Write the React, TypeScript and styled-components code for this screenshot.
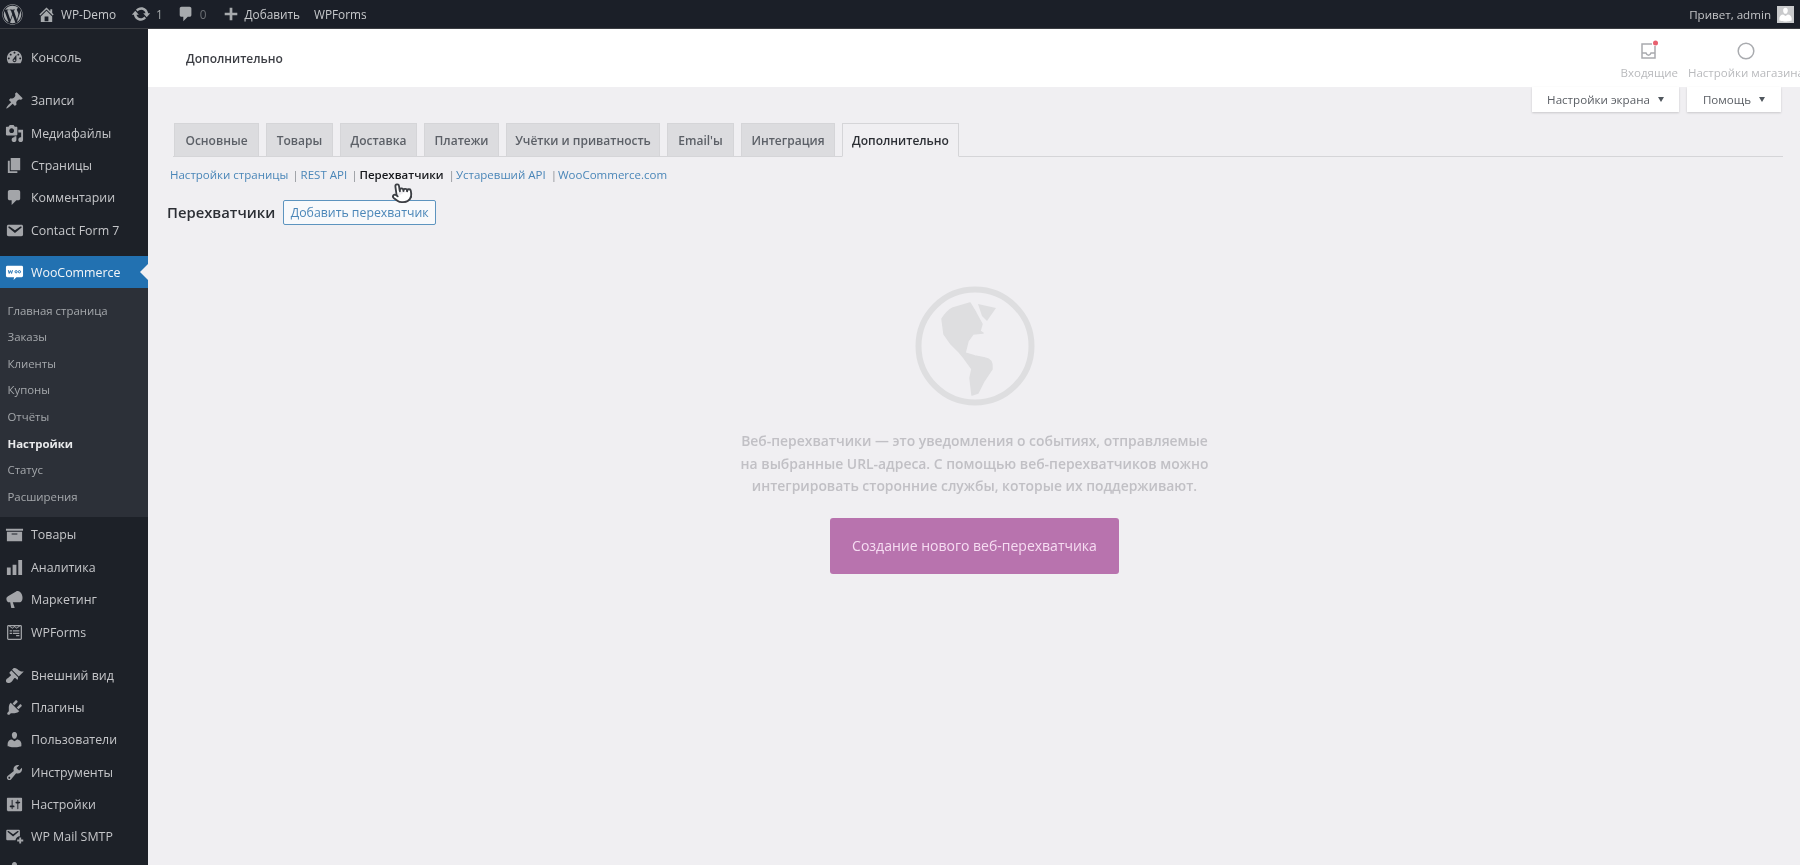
import React from 'react'
import styled, { createGlobalStyle } from 'styled-components'
import { FaWordpress, FaWpforms } from 'react-icons/fa'
import { LuPointer } from 'react-icons/lu'

const Global = createGlobalStyle`
  html, body { margin: 0; padding: 0; background: #f0eff2; height: 100%; overflow: hidden; }
  body { font-family: "Open Sans", "Noto Sans", sans-serif; }
  * { box-sizing: border-box; }
`

const paths = {
  dashboard: 'M3.76 16h12.48c1.1-1.37 1.76-3.11 1.76-5 0-4.42-3.58-8-8-8s-8 3.58-8 8c0 1.89.66 3.63 1.76 5zM10 4c.55 0 1 .45 1 1s-.45 1-1 1-1-.45-1-1 .45-1 1-1zM6 6c.55 0 1 .45 1 1s-.45 1-1 1-1-.45-1-1 .45-1 1-1zm8 0c.55 0 1 .45 1 1s-.45 1-1 1-1-.45-1-1 .45-1 1-1zm-5.37 5.55L12 7v6c0 1.1-.9 2-2 2s-2-.9-2-2c0-.57.24-1.08.63-1.45zM4 10c.55 0 1 .45 1 1s-.45 1-1 1-1-.45-1-1 .45-1 1-1zm12 0c.55 0 1 .45 1 1s-.45 1-1 1-1-.45-1-1 .45-1 1-1zm-5 3c0-.55-.45-1-1-1s-1 .45-1 1 .45 1 1 1 1-.45 1-1z',
  pin: 'M10.44 3.02l1.82-1.82 6.36 6.35-1.83 1.82c-1.05-.68-2.48-.57-3.41.36l-.75.75c-.92.93-1.04 2.35-.35 3.41l-1.83 1.82-2.41-2.41-2.8 2.79c-.42.42-3.38 2.71-3.8 2.29s1.86-3.39 2.28-3.81l2.79-2.79L4.1 9.36l1.83-1.82c1.05.69 2.48.57 3.4-.36l.75-.75c.93-.92 1.05-2.35.36-3.41z',
  media: 'M13 11V4c0-.55-.45-1-1-1h-1.67L9 1H5L3.67 3H2c-.55 0-1 .45-1 1v7c0 .55.45 1 1 1h10c.55 0 1-.45 1-1zM7 4.5c1.38 0 2.5 1.12 2.5 2.5S8.38 9.5 7 9.5 4.5 8.38 4.5 7 5.62 4.5 7 4.5zM14 6h5v10.5c0 1.38-1.12 2.5-2.5 2.5S14 17.88 14 16.5s1.12-2.5 2.5-2.5c.17 0 .34.02.5.05V9h-3V6zm-4 8.05V13h2v3.5c0 1.38-1.12 2.5-2.5 2.5S7 17.88 7 16.5 8.12 14 9.5 14c.17 0 .34.02.5.05z',
  pages: 'M6 15V2h10v13H6zm-1 1h8v2H3V5h2v11z',
  comment: 'M5 2h9c1.1 0 2 .9 2 2v7c0 1.1-.9 2-2 2h-2l-5 5v-5H5c-1.1 0-2-.9-2-2V4c0-1.1.9-2 2-2z',
  mail: 'M3.87 4h13.25C18.37 4 19 4.59 19 5.79v8.42c0 1.19-.63 1.79-1.88 1.79H3.87c-1.25 0-1.88-.6-1.88-1.79V5.79c0-1.2.63-1.79 1.88-1.79zm6.62 8.6l6.74-5.53c.24-.2.43-.66.13-1.07-.29-.41-.82-.42-1.17-.17l-5.7 3.86L4.8 5.83c-.35-.25-.88-.24-1.17.17-.3.41-.11.87.13 1.07z',
  archive: 'M19 4v2H1V4h18zM2 7h16v10H2V7zm11 3V9H7v1h6z',
  bars: 'M18 18V2h-4v16h4zm-6 0V7H8v11h4zm-6 0v-8H2v8h4z',
  megaphone: 'M18.15 5.94c.46 1.62.38 3.22-.02 4.48-.42 1.28-1.26 2.18-2.3 2.48-.16.06-.26.06-.4.06-.06.02-.12.02-.18.02-.06.02-.14.02-.22.02H8.2l1.9 5.5c.02.14-.06.26-.14.34-.08.1-.24.16-.34.16H6.95c-.1 0-.26-.06-.34-.16-.08-.08-.16-.2-.14-.34l-1-5.5H4.25l-.02-.02c-.5.06-1.08-.18-1.54-.62s-.88-1.08-1.06-1.88c-.24-.8-.2-1.56-.02-2.2.18-.62.58-1.08 1.06-1.3l.02-.02 9-5.4c.1-.06.18-.1.24-.16.06-.04.14-.08.24-.12.16-.08.28-.12.5-.18 1.04-.3 2.24.1 3.22 1 .98.88 1.84 2.24 2.26 3.86z',
  brush: 'M14.48 11.06L7.41 3.99l1.5-1.5c.5-.56 2.3-.47 3.51.32 1.21.8 1.43 1.28 2.91 2.1 1.18.64 2.45 1.26 4.45.85zm-.71.71L6.7 4.7 4.93 6.47c-.39.39-.39 1.02 0 1.41l1.06 1.06c.39.39.39 1.03 0 1.42-.6.6-1.43 1.11-2.21 1.69-.35.26-.7.53-1.01.84C1.43 13.23 1 14.86 1 15.5s.5 2.5 2.5 2.5c.96 0 2.62-.63 3.72-1.77.3-.31.57-.66.83-1.01.58-.79 1.09-1.61 1.69-2.21.39-.39 1.02-.39 1.41 0l1.06 1.06c.39.39 1.02.39 1.41 0z',
  plugin: 'M13.11 4.36L9.87 7.6 8 5.73l3.24-3.24c.35-.34 1.05-.2 1.56.32.52.51.66 1.21.31 1.55zm-8 1.77l.91-1.12 9.01 9.01-1.19.84c-.71.71-2.63 1.16-3.82 1.16H6.14L4.9 17.26c-.59.59-1.54.59-2.12 0-.59-.58-.59-1.53 0-2.12l1.24-1.24v-3.88c0-1.13.4-3.19 1.09-3.89zm7.26 3.97l3.24-3.24c.34-.35 1.04-.21 1.55.31.52.51.66 1.21.31 1.55l-3.24 3.25z',
  user: 'M10 9.25c-2.27 0-2.73-3.44-2.73-3.44C7 4.02 7.82 2 9.97 2c2.16 0 2.98 2.02 2.71 3.81 0 0-.41 3.44-2.68 3.44zm0 2.57L12.72 10c2.39 0 4.52 2.33 4.52 4.53v2.49s-3.65 1.13-7.24 1.13c-3.65 0-7.24-1.13-7.24-1.13v-2.49c0-2.25 1.94-4.48 4.47-4.48z',
  wrench: 'M16.68 9.77c-1.34 1.34-3.3 1.67-4.95.99l-5.41 6.52c-.99.99-2.59.99-3.58 0s-.99-2.59 0-3.57l6.52-5.42c-.68-1.65-.35-3.61.99-4.95 1.28-1.28 3.12-1.62 4.72-1.06l-2.89 2.89 2.82 2.82 2.86-2.87c.53 1.58.18 3.39-1.08 4.65zM3.81 16.21c.4.39 1.04.39 1.43 0 .4-.4.4-1.04 0-1.43-.39-.4-1.03-.4-1.43 0-.39.39-.39 1.03 0 1.43z',
  sliders: 'M18 16V4c0-.55-.45-1-1-1H3c-.55 0-1 .45-1 1v12c0 .55.45 1 1 1h14c.55 0 1-.45 1-1zM8 11h1c.55 0 1 .45 1 1s-.45 1-1 1H8v1.5c0 .28-.22.5-.5.5s-.5-.22-.5-.5V13H6c-.55 0-1-.45-1-1s.45-1 1-1h1V5.5c0-.28.22-.5.5-.5s.5.22.5.5V11zm5-2h-1c-.55 0-1-.45-1-1s.45-1 1-1h1V5.5c0-.28.22-.5.5-.5s.5.22.5.5V7h1c.55 0 1 .45 1 1s-.45 1-1 1h-1v5.5c0 .28-.22.5-.5.5s-.5-.22-.5-.5V9z',
  home: 'M16 8.5l1.53 1.53-1.06 1.06L10 4.62l-6.47 6.47-1.06-1.06L10 2.5l4 4v-2h2v4zm-6-2.46l6 5.99V18H4v-5.97zM12 17v-5H8v5h4z',
  plus: 'M17 8.5v3h-5.5V17h-3v-5.5H3v-3h5.5V3h3v5.5H17z',
  update: 'M10.2 3.28c3.53 0 6.43 2.61 6.92 6h2.08l-3.5 4-3.5-4h2.32c-.45-1.97-2.21-3.45-4.32-3.45-1.45 0-2.73.71-3.54 1.78L4.95 5.66C6.23 4.2 8.11 3.28 10.2 3.28zm-.4 13.44c-3.52 0-6.43-2.61-6.92-6H.8l3.5-4c1.17 1.33 2.33 2.67 3.5 4H5.48c.45 1.97 2.21 3.45 4.32 3.45 1.45 0 2.73-.71 3.54-1.78l1.71 1.95c-1.28 1.46-3.15 2.38-5.25 2.38z',
  mailPlus: 'M2.9 3h11.2C15.2 3 15.7 3.5 15.7 4.5v5.2c-2.6.1-4.4 1.9-4.6 4.3H2.9C1.8 14 1.3 13.5 1.3 12.5v-8C1.3 3.5 1.8 3 2.9 3zm5.6 7l5.6-4.7c.2-.2.3-.5.1-.8-.2-.4-.7-.4-1-.2L8.5 7.6 3.8 4.3c-.3-.2-.8-.2-1 .2-.2.3-.1.6.1.8zM15 11h2v2.2h2.2v2H17v2.2h-2v-2.2h-2.2v-2H15z',
}

type IconName = keyof typeof paths

const Dash: React.FC<{ name: IconName; size?: number }> = ({ name, size = 19 }) => (
  <svg width={size} height={size} viewBox="0 0 20 20" fill="currentColor">
    <path d={paths[name]} />
  </svg>
)

const Page = styled.div`
  width: 1800px;
  height: 865px;
  overflow: hidden;
  display: flex;
  flex-direction: column;
  position: relative;
  filter: blur(0.6px);
`

const TopBar = styled.header`
  height: 29px;
  flex: none;
  background: #1b1f28;
  color: #c8cacd;
  display: flex;
  align-items: center;
  font-size: 11.8px;
  border-bottom: 1px solid #3b3d42;
`

const TopItem = styled.div<{ $left: number }>`
  display: flex;
  align-items: center;
  gap: 5px;
  margin-left: ${(p) => p.$left}px;
  white-space: nowrap;
  svg { color: #a7aaad; flex: none; }
`

const Count = styled.span<{ $dim?: boolean }>`
  color: ${(p) => (p.$dim ? '#6d7075' : '#a7aaad')};
`

const TopRight = styled.div`
  margin-left: auto;
  margin-right: 6px;
  display: flex;
  align-items: center;
  gap: 6px;
  color: #c3c4c7;
  font-size: 11.6px;
`

const Avatar = styled.div`
  width: 17px;
  height: 17px;
  background: #c9cacc;
  display: flex;
  align-items: flex-end;
  justify-content: center;
  color: #fff;
  overflow: hidden;
`

const Body = styled.div`
  flex: 1;
  display: flex;
  min-height: 0;
`

const Sidebar = styled.nav`
  width: 148px;
  flex: none;
  background: #1d2128;
  padding-top: 12.5px;
  overflow: hidden;
`

const MenuRow = styled.div<{ $gap?: number; $active?: boolean }>`
  height: 32.4px;
  margin-top: ${(p) => p.$gap ?? 0}px;
  display: flex;
  align-items: center;
  gap: 7px;
  padding-left: 5px;
  font-size: 12.4px;
  white-space: nowrap;
  position: relative;
  background: ${(p) => (p.$active ? '#2271b1' : 'transparent')};
  color: ${(p) => (p.$active ? '#f4f6f8' : '#c5c6c9')};
  svg { flex: none; color: ${(p) => (p.$active ? '#fff' : '#a3a5a9')}; }
`

const Notch = styled.span`
  position: absolute;
  right: 0;
  top: 50%;
  margin-top: -8px;
  border: 8px solid transparent;
  border-right-color: #f0eff2;
  border-left-width: 0;
`

const SubMenu = styled.div`
  background: #2c3038;
  padding: 8.5px 0 7.7px;
  margin-bottom: 1.4px;
`

const SubRow = styled.div<{ $current?: boolean }>`
  height: 26.6px;
  display: flex;
  align-items: center;
  padding-left: 7.5px;
  font-size: 11.4px;
  font-weight: ${(p) => (p.$current ? 700 : 400)};
  color: ${(p) => (p.$current ? '#e9eaec' : '#a5a8ac')};
`

const Main = styled.main`
  flex: 1;
  min-width: 0;
  display: flex;
  flex-direction: column;
  background: #f0eff2;
`

const Header = styled.div`
  height: 58px;
  flex: none;
  background: #fff;
  display: flex;
  align-items: center;
  padding-left: 38px;
  font-size: 12px;
  font-weight: 600;
  color: #3c3e44;
`

const HeaderTitle = styled.div`
  flex: 1;
  margin-top: 1px;
`

const Activity = styled.div`
  display: flex;
  gap: 10px;
  margin-right: -4px;
  margin-top: 3px;
  flex: none;
`

const ActivityItem = styled.div`
  display: flex;
  flex-direction: column;
  align-items: center;
  gap: 3px;
  color: #b9babd;
  font-size: 11.5px;
  font-weight: 400;
  white-space: nowrap;
`

const ActivityIcon = styled.div`
  height: 22px;
  display: flex;
  align-items: center;
  justify-content: center;
  color: #a9abaf;
`

const Content = styled.div`
  padding: 0 17px 0 26px;
  position: relative;
`

const ScreenMeta = styled.div`
  display: flex;
  justify-content: flex-end;
  gap: 8px;
  padding-right: 2px;
  height: 25px;
`

const MetaButton = styled.div<{ $width: number }>`
  width: ${(p) => p.$width}px;
  height: 25px;
  background: #fff;
  box-shadow: 0 1px 2px rgba(0, 0, 0, 0.16);
  display: flex;
  align-items: center;
  justify-content: center;
  gap: 8px;
  font-size: 11.6px;
  color: #5a5e64;
  &::after {
    content: '';
    border: 3.5px solid transparent;
    border-top: 5px solid #50575e;
    border-bottom-width: 0;
  }
`

const Tabs = styled.div`
  margin-top: 11px;
  margin-left: -1px;
  padding-left: 1px;
  height: 34px;
  display: flex;
  gap: 7px;
  border-bottom: 1px solid #d5d5d8;
`

const Tab = styled.div<{ $active?: boolean; $width: number }>`
  width: ${(p) => p.$width}px;
  height: ${(p) => (p.$active ? 34 : 33)}px;
  display: flex;
  align-items: center;
  justify-content: center;
  flex: none;
  font-size: 12px;
  font-weight: 600;
  white-space: nowrap;
  background: ${(p) => (p.$active ? '#f0eff2' : '#dcdcdf')};
  color: ${(p) => (p.$active ? '#2c2f35' : '#5c6067')};
  border: 1px solid #d5d5d8;
  border-bottom: ${(p) => (p.$active ? '1px solid #f0eff2' : 'none')};
`

const SubNav = styled.div`
  display: flex;
  align-items: center;
  height: 18px;
  margin-top: 8px;
  margin-left: -4px;
  font-size: 11.5px;
  white-space: nowrap;
`

const SubLink = styled.span<{ $current?: boolean }>`
  color: ${(p) => (p.$current ? '#16181c' : '#4a86b8')};
  font-weight: ${(p) => (p.$current ? 600 : 400)};
`

const Sep = styled.span<{ $before: number; $after: number }>`
  color: #8d9196;
  margin: 0 ${(p) => p.$after}px 0 ${(p) => p.$before}px;
`

const Heading = styled.div`
  display: flex;
  align-items: center;
  gap: 8px;
  margin-top: 16px;
  margin-left: -7px;
  height: 26px;
`

const HeadingText = styled.h1`
  margin: 0;
  font-size: 14.8px;
  font-weight: 600;
  color: #2c2f35;
`

const AddButton = styled.div`
  width: 153px;
  height: 25px;
  border: 1px solid #5d94bf;
  border-radius: 2px;
  background: #f8f9fb;
  color: #4a86b8;
  font-size: 12.3px;
  display: flex;
  align-items: center;
  justify-content: center;
`

const Blank = styled.div`
  display: flex;
  flex-direction: column;
  align-items: center;
  margin-top: 61px;
  margin-left: -8px;
`

const Globe = styled.svg`
  width: 120px;
  height: 120px;
  color: #dedee0;
`

const BlankText = styled.p`
  margin: 24px 0 0;
  font-size: 13.9px;
  line-height: 22.5px;
  font-weight: 600;
  color: #c1c0c5;
  text-align: center;
  white-space: nowrap;
`

const BigButton = styled.div`
  margin-top: 20px;
  width: 289px;
  height: 56px;
  border-radius: 3px;
  background: #b873ae;
  color: #f6dcf2;
  font-size: 14px;
  display: flex;
  align-items: center;
  justify-content: center;
`

const Cursor = styled.div`
  position: absolute;
  left: 243px;
  top: 95px;
  width: 22px;
  height: 24px;
  color: #3c3f44;
  transform: rotate(-8deg);
  svg { fill: #fff; }
`

const items: { icon: IconName; label: string; gap?: number }[] = [
  { icon: 'dashboard', label: 'Консоль' },
  { icon: 'pin', label: 'Записи', gap: 10.6 },
  { icon: 'media', label: 'Медиафайлы' },
  { icon: 'pages', label: 'Страницы' },
  { icon: 'comment', label: 'Комментарии' },
  { icon: 'mail', label: 'Contact Form 7' },
]

const lowerItems: { icon: IconName | 'forms'; label: string; gap?: number }[] = [
  { icon: 'archive', label: 'Товары' },
  { icon: 'bars', label: 'Аналитика' },
  { icon: 'megaphone', label: 'Маркетинг' },
  { icon: 'forms', label: 'WPForms' },
  { icon: 'brush', label: 'Внешний вид', gap: 10.6 },
  { icon: 'plugin', label: 'Плагины' },
  { icon: 'user', label: 'Пользователи' },
  { icon: 'wrench', label: 'Инструменты' },
  { icon: 'sliders', label: 'Настройки' },
  { icon: 'mailPlus', label: 'WP Mail SMTP' },
]

const subItems = ['Главная страница', 'Заказы', 'Клиенты', 'Купоны', 'Отчёты', 'Настройки', 'Статус', 'Расширения']

const tabs = [
  { label: 'Основные', width: 85 },
  { label: 'Товары', width: 67 },
  { label: 'Доставка', width: 77 },
  { label: 'Платежи', width: 75 },
  { label: 'Учётки и приватность', width: 154 },
  { label: "Email'ы", width: 67 },
  { label: 'Интеграция', width: 94 },
  { label: 'Дополнительно', width: 117, active: true },
]

const WooIcon = () => (
  <svg width="19" height="19" viewBox="0 0 20 20">
    <path d="M2.5 3h15A1.5 1.5 0 0 1 19 4.5v9a1.5 1.5 0 0 1-1.5 1.5H12l-3 3 .6-3H2.5A1.5 1.5 0 0 1 1 13.500v-9A1.500 1.500 0 0 1 2.500 3z" fill="#fff" />
    <path d="M3.500 7.500l.9 3.500 1.300-3 1.200 3 1-3.500M10.500 9.200a1.200 1.200 0 1 0 2.400 0 1.200 1.200 0 1 0-2.400 0M14 9.200a1.200 1.200 0 1 0 2.400 0 1.200 1.200 0 1 0-2.400 0" fill="none" stroke="#2271b1" strokeWidth="1" />
  </svg>
)

const renderIcon = (icon: IconName | 'forms') =>
  icon === 'forms' ? <FaWpforms size={17} style={{ margin: '0 1px' }} /> : <Dash name={icon} />

const App: React.FC = () => (
  <Page>
    <Global />
    <TopBar>
      <TopItem $left={2}>
        <FaWordpress size={21} />
      </TopItem>
      <TopItem $left={14}>
        <Dash name="home" size={19} />
        <span>WP-Demo</span>
      </TopItem>
      <TopItem $left={15}>
        <Dash name="update" size={20} />
        <Count>1</Count>
      </TopItem>
      <TopItem $left={14}>
        <Dash name="comment" size={18} />
        <Count $dim>0</Count>
      </TopItem>
      <TopItem $left={15}>
        <Dash name="plus" size={18} />
        <span>Добавить</span>
      </TopItem>
      <TopItem $left={14}>
        <span>WPForms</span>
      </TopItem>
      <TopRight>
        <span>Привет, admin</span>
        <Avatar>
          <Dash name="user" size={17} />
        </Avatar>
      </TopRight>
    </TopBar>
    <Body>
      <Sidebar>
        {items.map((it) => (
          <MenuRow key={it.label} $gap={it.gap}>
            <Dash name={it.icon} />
            <span>{it.label}</span>
          </MenuRow>
        ))}
        <MenuRow $gap={9.5} $active>
          <WooIcon />
          <span>WooCommerce</span>
          <Notch />
        </MenuRow>
        <SubMenu>
          {subItems.map((label) => (
            <SubRow key={label} $current={label === 'Настройки'}>
              {label}
            </SubRow>
          ))}
        </SubMenu>
        {lowerItems.map((it) => (
          <MenuRow key={it.label} $gap={it.gap}>
            {renderIcon(it.icon)}
            <span>{it.label}</span>
          </MenuRow>
        ))}
        <MenuRow>
          <Dash name="user" />
        </MenuRow>
      </Sidebar>
      <Main>
        <Header>
          <HeaderTitle>Дополнительно</HeaderTitle>
          <Activity>
            <ActivityItem>
              <ActivityIcon>
                <svg width="22" height="22" viewBox="0 0 22 22" fill="none">
                  <path d="M17 6v12H4V4h10" stroke="currentColor" strokeWidth="1.500" />
                  <path d="M4 13h4c.5 1.500 1.500 2.200 2.500 2.200S12.500 14.500 13 13h4" stroke="currentColor" strokeWidth="1.500" />
                  <circle cx="17.500" cy="3" r="2.500" fill="#e8606f" />
                </svg>
              </ActivityIcon>
              <span>Входящие</span>
            </ActivityItem>
            <ActivityItem>
              <ActivityIcon>
                <svg width="20" height="20" viewBox="0 0 20 20" fill="none">
                  <circle cx="10" cy="10" r="7.800" stroke="currentColor" strokeWidth="1.500" />
                </svg>
              </ActivityIcon>
              <span>Настройки магазина</span>
            </ActivityItem>
          </Activity>
        </Header>
        <Content>
          <ScreenMeta>
            <MetaButton $width={147}>Настройки экрана</MetaButton>
            <MetaButton $width={94}>Помощь</MetaButton>
          </ScreenMeta>
          <Tabs>
            {tabs.map((t) => (
              <Tab key={t.label} $active={t.active} $width={t.width}>
                {t.label}
              </Tab>
            ))}
          </Tabs>
          <SubNav>
            <SubLink>Настройки страницы</SubLink>
            <Sep $before={4} $after={2}>|</Sep>
            <SubLink>REST API</SubLink>
            <Sep $before={4} $after={2}>|</Sep>
            <SubLink $current>Перехватчики</SubLink>
            <Sep $before={5} $after={1}>|</Sep>
            <SubLink>Устаревший API</SubLink>
            <Sep $before={5} $after={1}>|</Sep>
            <SubLink>WooCommerce.com</SubLink>
          </SubNav>
          <Heading>
            <HeadingText>Перехватчики</HeadingText>
            <AddButton>Добавить перехватчик</AddButton>
          </Heading>
          <Cursor>
            <LuPointer size={22} />
          </Cursor>
          <Blank>
            <Globe viewBox="0 0 120 120">
              <circle cx="60" cy="60" r="56.500" fill="none" stroke="currentColor" strokeWidth="6" />
              <path
                fill="currentColor"
                stroke="currentColor"
                strokeWidth="1.500"
                strokeLinejoin="round"
                d="M27 33Q32 25 38 22L55 17 61 27 67 38 65 45 68 47 58 48 53 55 50 67 60 70 70 72Q78 73 77 83L69 95 63 107 57 109 55 92 57 83 49 72 44 66 36 58 29 48z"
              />
              <path fill="currentColor" d="M63 18L81 22 72 35 67 30z" />
            </Globe>
            <BlankText>
              Веб-перехватчики — это уведомления о событиях, отправляемые
              <br />
              на выбранные URL-адреса. С помощью веб-перехватчиков можно
              <br />
              интегрировать сторонние службы, которые их поддерживают.
            </BlankText>
            <BigButton>Создание нового веб-перехватчика</BigButton>
          </Blank>
        </Content>
      </Main>
    </Body>
  </Page>
)

export default App
